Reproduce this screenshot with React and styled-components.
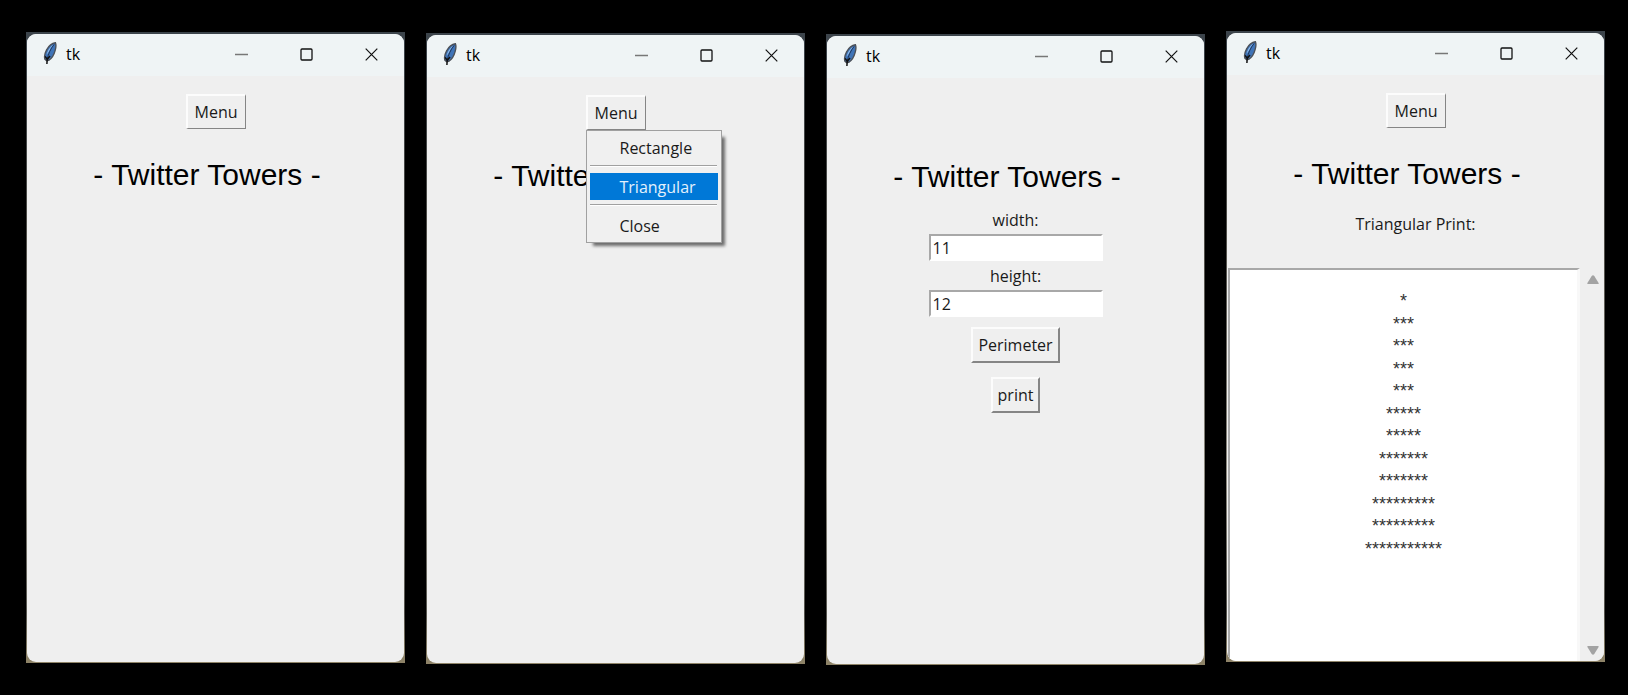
import React from "react";
import styled, { createGlobalStyle } from "styled-components";

const GlobalStyle = createGlobalStyle`
  *, *::before, *::after { box-sizing: border-box; }
  body { margin: 0; background: #000; }
`;

const ui = `"Open Sans", "Noto Sans", sans-serif`;

const Desktop = styled.main`
  min-height: 100vh;
  display: grid;
  grid-template-columns: repeat(4, minmax(0, 1fr));
  gap: 21px;
  padding: 31px 23px 29px 26px;
  background: #000;
  color: #1a1a1a;
  font: 16px/22px ${ui};
`;

const Frame = styled.section`
  display: flex;
  min-width: 0;
  margin: ${({ $drop }) => `${$drop}px 0 ${4 - $drop}px`};
  padding: 2px 1px 1px;
  background: linear-gradient(#3c444b, #4b4a45 30%, #8d8a80 70%, #55544e 92%, #8f8468);
`;

const Surface = styled.div`
  flex: 1;
  min-width: 0;
  display: flex;
  flex-direction: column;
  border-radius: 9px;
  overflow: hidden;
  background: #efefef;
`;

const TitleBar = styled.header`
  flex: none;
  height: 42px;
  display: flex;
  align-items: flex-start;
  padding-left: 16px;
  background: #eff4f5;
  color: #000;
  line-height: 40px;
`;

const Caption = styled.span`
  flex: 1;
  padding-left: 9px;
`;

const CaptionButton = styled.button`
  width: 65px;
  height: 40px;
  display: grid;
  place-items: center;
  padding: 0;
  border: 0;
  background: none;
`;

const Body = styled.div`
  flex: 1;
  display: flex;
  flex-direction: column;
  align-items: center;
  padding-top: 18px;
`;

const MenuSlot = styled.div`
  position: relative;
  height: 35px;
`;

const RaisedButton = styled.button`
  height: ${({ $thick }) => ($thick ? 36 : 35)}px;
  display: block;
  padding: 0 ${({ $thick }) => ($thick ? 5 : 7)}px;
  border-style: solid;
  border-width: ${({ $thick }) => ($thick ? "2px" : "2px 1px 1px 2px")};
  border-color: #fcfcfc #858585 #858585 #fcfcfc;
  background: #efefef;
  color: inherit;
  font: inherit;
`;

const Heading = styled.h1`
  margin: 29px 17px 0 0;
  color: #000;
  font: 400 30px/34px "Liberation Sans", Arial, sans-serif;
  white-space: nowrap;
`;

const Popup = styled.div`
  position: absolute;
  top: 100%;
  left: 0;
  width: 136px;
  display: flex;
  flex-direction: column;
  padding: 3px;
  border: 1px solid #a0a0a0;
  background: #f0f0f0;
  box-shadow: 5px 5px 3px -2px rgba(0, 0, 0, 0.55);
`;

const PopupItem = styled.button`
  height: 27px;
  padding: 0 0 0 30px;
  border: 0;
  background: ${({ $active }) => ($active ? "#0078d7" : "transparent")};
  color: ${({ $active }) => ($active ? "#e4f1fc" : "inherit")};
  font: inherit;
  text-align: left;
`;

const Divider = styled.hr`
  align-self: stretch;
  height: 2px;
  margin: 4px 1px 6px 0;
  border: 0;
  border-top: 1px solid #a0a0a0;
  border-bottom: 1px solid #fff;
`;

const Form = styled.form`
  display: flex;
  flex-direction: column;
  align-items: center;
  padding-top: 11px;
`;

const Field = styled.label`
  display: flex;
  flex-direction: column;
  align-items: center;
  gap: 3px;
  padding: 4px 0 0;
`;

const Entry = styled.input`
  width: 174px;
  height: 27px;
  padding: 0 2px;
  border-style: solid;
  border-width: 2px;
  border-color: #a8a8a8 #fff #fff #a8a8a8;
  border-radius: 0;
  background: #fff;
  color: #1a1a1a;
  font: inherit;
  outline: 0;
`;

const Actions = styled.div`
  display: flex;
  flex-direction: column;
  align-items: center;
  gap: 14px;
  padding-top: 10px;
`;

const OutputLabel = styled.label`
  padding-top: 22px;
`;

const OutputRow = styled.div`
  align-self: stretch;
  flex: 1;
  display: flex;
  margin-top: 33px;
  padding-left: 1px;
`;

const Output = styled.textarea`
  flex: 1;
  min-width: 0;
  padding: 20px 0 0;
  border-style: solid;
  border-width: 2px 3px 0 2px;
  border-color: #a8a8a8 #f8f8f8 #fff #a8a8a8;
  border-radius: 0;
  background: #fff;
  color: #333;
  font: 18px/1.25 "Liberation Sans", Arial, sans-serif;
  text-align: center;
  resize: none;
  overflow: hidden;
  outline: 0;
`;

const ScrollTrack = styled.div`
  width: 24px;
  display: flex;
  flex-direction: column;
  justify-content: space-between;
  padding-left: 2px;
  background: #efefef;
`;

const ScrollButton = styled.button`
  height: 22px;
  display: grid;
  place-items: center;
  padding: 0;
  border: 0;
  background: none;
`;

function Feather() {
  return (
    <svg width="14" height="40" viewBox="0 -8 14 40" aria-hidden="true">
      <path d="M12.4 .8C9.2 1.3 5.6 4.3 3.6 7.8 2 10.8 1 14.6 2 17.4l1.7 1.4 2.5-.8c3.2-2.3 5-6 5.9-9.4.8-2.8 1.2-5.8.3-7.8z" fill="#3f74b8" stroke="#4b5058" strokeWidth="1.4" />
      <path d="M10.8 2.4C7.6 4 4.7 8 3.6 12.6c1.5-1.7 2.3-2.7 3.2-4.6.8-1.9 2.3-4.2 4-5.6z" fill="#91bce9" />
      <path d="M11.2 2.3C7.4 7 5.2 12 4.2 17.8" fill="none" stroke="#1c355d" strokeWidth="1" />
      <path d="M2.2 14.3l1.6 2.6M7 14l-2.6 3.2M4.3 15.5l-.4 6.5" fill="none" stroke="#111" strokeWidth="1.5" />
    </svg>
  );
}

function CaptionIcon({ kind }) {
  return (
    <svg width="13" height="13" viewBox="0 0 13 13" fill="none" stroke="#111" aria-hidden="true">
      {kind === "Minimize" && <path d="M0 6.5h13" stroke="#777" strokeWidth="1.3" />}
      {kind === "Maximize" && <rect x="1" y="1" width="11" height="11" rx="1" strokeWidth="1.3" />}
      {kind === "Close" && <path d="M.7.7l11.6 11.6M12.3.7L.7 12.3" strokeWidth="1.2" />}
    </svg>
  );
}

function Arrow({ down }) {
  return (
    <svg width="12" height="9" viewBox="0 0 12 9" aria-hidden="true">
      <path d={down ? "M1 0h10q1 0 .6 1L7.3 8q-1.3 1.6-2.6 0L.4 1Q0 0 1 0z" : "M1 9h10q1 0 .6-1L7.3 1Q6-.6 4.7 1L.4 8Q0 9 1 9z"} fill="#a3a3a3" />
    </svg>
  );
}

function TkWindow({ drop, children }) {
  return (
    <Frame $drop={drop}>
      <Surface>
        <TitleBar>
          <Feather />
          <Caption>tk</Caption>
          {["Minimize", "Maximize", "Close"].map((kind) => (
            <CaptionButton key={kind} type="button" aria-label={kind}>
              <CaptionIcon kind={kind} />
            </CaptionButton>
          ))}
        </TitleBar>
        <Body>{children}</Body>
      </Surface>
    </Frame>
  );
}

const Title = () => <Heading>- Twitter Towers -</Heading>;

const tower = [1, 3, 3, 3, 3, 5, 5, 7, 7, 9, 9, 11].map((n) => "*".repeat(n)).join("\n");

export default function App() {
  return (
    <>
      <GlobalStyle />
      <Desktop>
        <TkWindow drop={1}>
          <MenuSlot>
            <RaisedButton type="button">Menu</RaisedButton>
          </MenuSlot>
          <Title />
        </TkWindow>

        <TkWindow drop={2}>
          <MenuSlot>
            <RaisedButton type="button" aria-expanded="true">Menu</RaisedButton>
            <Popup role="menu">
              <PopupItem type="button" role="menuitem">Rectangle</PopupItem>
              <Divider />
              <PopupItem type="button" role="menuitem" $active>Triangular</PopupItem>
              <Divider />
              <PopupItem type="button" role="menuitem">Close</PopupItem>
            </Popup>
          </MenuSlot>
          <Title />
        </TkWindow>

        <TkWindow drop={3}>
          <MenuSlot />
          <Title />
          <Form>
            <Field>
              width:
              <Entry defaultValue="11" />
            </Field>
            <Field>
              height:
              <Entry defaultValue="12" />
            </Field>
            <Actions>
              <RaisedButton type="button" $thick>Perimeter</RaisedButton>
              <RaisedButton type="button" $thick>print</RaisedButton>
            </Actions>
          </Form>
        </TkWindow>

        <TkWindow drop={0}>
          <MenuSlot>
            <RaisedButton type="button">Menu</RaisedButton>
          </MenuSlot>
          <Title />
          <OutputLabel htmlFor="output">Triangular Print:</OutputLabel>
          <OutputRow>
            <Output id="output" readOnly value={tower} />
            <ScrollTrack>
              <ScrollButton type="button" aria-label="Scroll up"><Arrow /></ScrollButton>
              <ScrollButton type="button" aria-label="Scroll down"><Arrow down /></ScrollButton>
            </ScrollTrack>
          </OutputRow>
        </TkWindow>
      </Desktop>
    </>
  );
}
